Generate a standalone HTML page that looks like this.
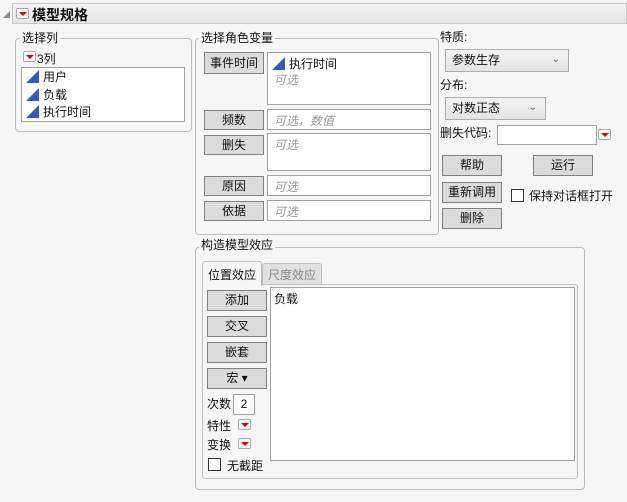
<!DOCTYPE html>
<html><head><meta charset="utf-8"><style>
*{box-sizing:border-box;margin:0;padding:0}
body{width:627px;height:502px;background:#f6f6f6;font-family:"Liberation Sans","Noto Sans CJK SC",sans-serif;font-size:12px;color:#111;position:relative;overflow:hidden}
.a{position:absolute}
.grp{position:absolute;border:1px solid #bdbdbd;border-radius:4px}
.lbl{position:absolute;background:#f6f6f6;padding:0 2px;line-height:14px}
.btn{position:absolute;border:1px solid #808080;background:#dcdcdc;text-align:center;line-height:18px}
.box{position:absolute;border:1px solid #a0a0a0;background:#fff}
.ph{color:#999;font-style:italic;position:absolute;left:6px}
.red{position:absolute;width:13px;height:11px;border:1px solid #aaa;background:#fff;border-radius:2px}
.red:after{content:"";position:absolute;left:2px;top:3px;border-left:4px solid transparent;border-right:4px solid transparent;border-top:4px solid #d00}
.tri{display:inline-block;width:0;height:0;border-left:13px solid transparent;border-bottom:13px solid #2f5cb8;vertical-align:-2px;margin-right:4px}
.dd{position:absolute;border:1px solid #adadad;background:linear-gradient(#f2f2f2,#e4e4e4);line-height:20px;padding-left:6px}
.dd:after{content:"⌄";position:absolute;right:8px;top:0px;color:#666;font-size:10px}
.cb{position:absolute;width:13px;height:13px;border:1px solid #333;background:#fff}
</style></head><body>
<div class="a" style="left:3px;top:11px;width:0;height:0;border-left:7px solid transparent;border-bottom:7px solid #888"></div>
<div class="a" style="left:12px;top:3px;width:615px;height:21px;border:1px solid #c8c8c8;background:linear-gradient(#f4f4f4,#e6e6e6)"></div>
<div class="red" style="left:16px;top:8px"></div>
<div class="a" style="left:32px;top:5px;font-size:14px;font-weight:bold">模型规格</div>

<div class="grp" style="left:15px;top:38px;width:177px;height:94px"></div>
<div class="lbl" style="left:20px;top:31px">选择列</div>
<div class="red" style="left:23px;top:51px"></div>
<div class="a" style="left:37px;top:50px">3列</div>
<div class="box" style="left:21px;top:67px;width:164px;height:55px"></div>
<div class="a" style="left:26px;top:69px;line-height:17.5px"><div><span class="tri"></span>用户</div><div><span class="tri"></span>负载</div><div><span class="tri"></span>执行时间</div></div>

<div class="grp" style="left:195px;top:38px;width:244px;height:197px"></div>
<div class="lbl" style="left:199px;top:31px">选择角色变量</div>
<div class="btn" style="left:204px;top:52px;width:60px;height:22px;line-height:20px">事件时间</div>
<div class="box" style="left:267px;top:52px;width:164px;height:53px"><div class="a" style="left:4px;top:2px"><span class="tri"></span>执行时间</div><div class="ph" style="top:18px">可选</div></div>
<div class="btn" style="left:204px;top:110px;width:60px;height:20px">频数</div>
<div class="box" style="left:267px;top:109px;width:164px;height:21px"><div class="ph" style="top:2px">可选，数值</div></div>
<div class="btn" style="left:204px;top:135px;width:60px;height:20px">删失</div>
<div class="box" style="left:267px;top:133px;width:164px;height:38px"><div class="ph" style="top:2px">可选</div></div>
<div class="btn" style="left:204px;top:176px;width:60px;height:20px">原因</div>
<div class="box" style="left:267px;top:175px;width:164px;height:21px"><div class="ph" style="top:2px">可选</div></div>
<div class="btn" style="left:204px;top:201px;width:60px;height:20px">依据</div>
<div class="box" style="left:267px;top:200px;width:164px;height:21px"><div class="ph" style="top:2px">可选</div></div>

<div class="a" style="left:440px;top:28px">特质:</div>
<div class="dd" style="left:445px;top:49px;width:124px;height:23px">参数生存</div>
<div class="a" style="left:440px;top:76px">分布:</div>
<div class="dd" style="left:445px;top:97px;width:101px;height:23px">对数正态</div>
<div class="a" style="left:440px;top:124px">删失代码:</div>
<div class="box" style="left:497px;top:125px;width:100px;height:20px"></div>
<div class="red" style="left:598px;top:129px"></div>
<div class="btn" style="left:442px;top:155px;width:60px;height:21px">帮助</div>
<div class="btn" style="left:533px;top:155px;width:60px;height:21px">运行</div>
<div class="btn" style="left:442px;top:182px;width:60px;height:21px">重新调用</div>
<div class="cb" style="left:511px;top:189px"></div>
<div class="a" style="left:529px;top:187px">保持对话框打开</div>
<div class="btn" style="left:442px;top:208px;width:60px;height:21px">删除</div>

<div class="grp" style="left:195px;top:247px;width:390px;height:243px"></div>
<div class="lbl" style="left:199px;top:238px">构造模型效应</div>
<div class="a" style="left:202px;top:284px;width:376px;height:195px;border:1px solid #c0c0c0;border-radius:3px;background:#f6f6f6"></div>
<div class="a" style="left:202px;top:261px;width:60px;height:25px;border:1px solid #c0c0c0;border-bottom:none;background:#f6f6f6;border-radius:3px 3px 0 0;padding:4px 0 0 5px">位置效应</div>
<div class="a" style="left:262px;top:263px;width:60px;height:21px;border:1px solid #c0c0c0;border-bottom:none;background:#e0e0e0;color:#888;border-radius:3px 3px 0 0;padding:2px 0 0 5px">尺度效应</div>
<div class="btn" style="left:207px;top:290px;width:60px;height:21px">添加</div>
<div class="btn" style="left:207px;top:316px;width:60px;height:21px">交叉</div>
<div class="btn" style="left:207px;top:342px;width:60px;height:21px">嵌套</div>
<div class="btn" style="left:207px;top:368px;width:60px;height:21px">宏 ▾</div>
<div class="a" style="left:207px;top:395px">次数</div>
<div class="box" style="left:233px;top:394px;width:22px;height:21px;text-align:center;line-height:19px">2</div>
<div class="a" style="left:207px;top:417px">特性</div>
<div class="red" style="left:238px;top:419px"></div>
<div class="a" style="left:207px;top:436px">变换</div>
<div class="red" style="left:238px;top:438px"></div>
<div class="cb" style="left:208px;top:458px"></div>
<div class="a" style="left:227px;top:457px">无截距</div>
<div class="box" style="left:270px;top:287px;width:305px;height:174px;padding:2px 3px">负载</div>
</body></html>
